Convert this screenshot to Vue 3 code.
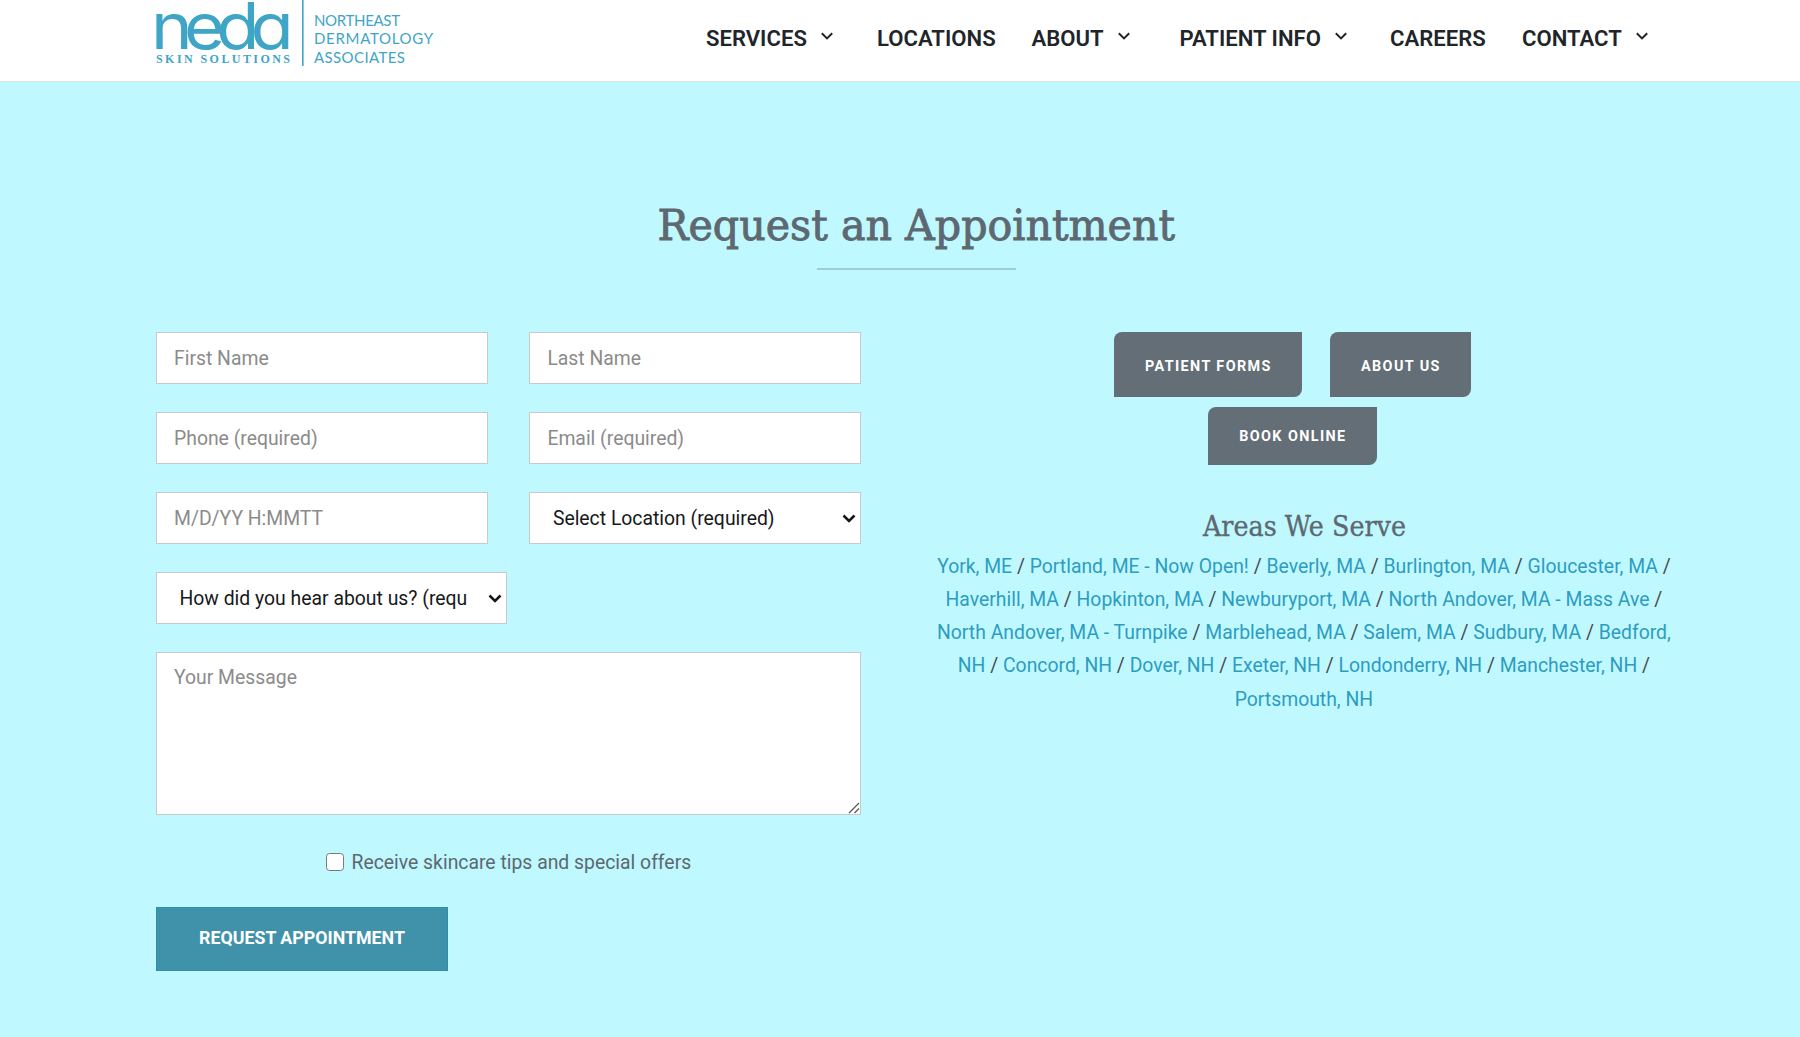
<script setup>
const nav = [
  { label: 'SERVICES', menu: true },
  { label: 'LOCATIONS' },
  { label: 'ABOUT', menu: true },
  { label: 'PATIENT INFO', menu: true },
  { label: 'CAREERS' },
  { label: 'CONTACT', menu: true },
]

// Areas grouped by line; a name may continue on the next line.
const areaLines = [
  ['York, ME', 'Portland, ME - Now Open!', 'Beverly, MA', 'Burlington, MA', 'Gloucester, MA'],
  ['Haverhill, MA', 'Hopkinton, MA', 'Newburyport, MA', 'North Andover, MA - Mass Ave'],
  ['North Andover, MA - Turnpike', 'Marblehead, MA', 'Salem, MA', 'Sudbury, MA', 'Bedford,'],
  ['NH', 'Concord, NH', 'Dover, NH', 'Exeter, NH', 'Londonderry, NH', 'Manchester, NH'],
  ['Portsmouth, NH'],
]
const hasSlash = (name) => name !== 'Bedford,' && name !== 'Portsmouth, NH'
</script>

<template>
  <div class="page">
    <header class="header">
      <a class="logo">
        <svg width="290" height="70" viewBox="0 0 290 70" fill="#3fa5c6">
          <text class="word" x="-5" y="49.3" textLength="134" lengthAdjust="spacingAndGlyphs">neda</text>
          <text class="skin" x="0" y="62.7" textLength="134">SKIN SOLUTIONS</text>
          <rect x="146" y="0" width="1.6" height="66" />
          <g class="assoc">
            <text x="158" y="26" textLength="86">NORTHEAST</text>
            <text x="158" y="44.3" textLength="119">DERMATOLOGY</text>
            <text x="158" y="62.5" textLength="91">ASSOCIATES</text>
          </g>
        </svg>
      </a>
      <nav class="nav">
        <a v-for="item in nav" :key="item.label" class="nav-item">
          <span>{{ item.label }}</span>
          <svg v-if="item.menu" class="caret" width="12" height="8" viewBox="0 0 12 8">
            <path d="M0.8 1.2 6 6.4 11.2 1.2" fill="none" stroke="#212529" stroke-width="2" />
          </svg>
        </a>
      </nav>
    </header>

    <main class="main">
      <h1 class="title">
        <svg width="520" height="56" viewBox="0 0 520 56">
          <text x="0.5" y="39.8" textLength="517.5" lengthAdjust="spacingAndGlyphs">Request an Appointment</text>
        </svg>
      </h1>
      <div class="rule"></div>

      <div class="columns">
        <form class="form" @submit.prevent>
          <input class="field" placeholder="First Name" />
          <input class="field" placeholder="Last Name" />
          <input class="field" placeholder="Phone (required)" />
          <input class="field" placeholder="Email (required)" />
          <input class="field" placeholder="M/D/YY H:MMTT" />
          <div class="select">
            <select class="field"><option>Select Location (required)</option></select>
            <svg class="arrow" width="14" height="10" viewBox="0 0 14 10">
              <path d="M1.5 1.5 7 7 12.5 1.5" fill="none" stroke="#16181b" stroke-width="2.6" />
            </svg>
          </div>
          <div class="select wide">
            <select class="field"><option>How did you hear about us? (required)</option></select>
            <svg class="arrow" width="14" height="10" viewBox="0 0 14 10">
              <path d="M1.5 1.5 7 7 12.5 1.5" fill="none" stroke="#16181b" stroke-width="2.6" />
            </svg>
          </div>
          <div class="message">
            <textarea class="field" placeholder="Your Message"></textarea>
            <svg class="grip" width="12" height="12" viewBox="0 0 12 12">
              <path d="M1 11 11 1M6.5 11 11 6.5" fill="none" stroke="#555" stroke-width="1.2" />
            </svg>
          </div>
          <label class="tips"><input class="check" type="checkbox" /><span>Receive skincare tips and special offers</span></label>
          <button class="submit">REQUEST APPOINTMENT</button>
        </form>

        <aside class="side">
          <div class="buttons">
            <a class="btn forms">PATIENT FORMS</a>
            <a class="btn about">ABOUT US</a>
          </div>
          <div class="buttons second">
            <a class="btn book">BOOK ONLINE</a>
          </div>
          <h2 class="areas-title">
            <svg width="206" height="36" viewBox="0 0 206 36">
              <text x="2" y="26.3" textLength="203" lengthAdjust="spacingAndGlyphs">Areas We Serve</text>
            </svg>
          </h2>
          <div class="areas">
            <div v-for="(line, i) in areaLines" :key="i" class="area-line">
              <template v-for="name in line" :key="name"><a>{{ name }}</a><template v-if="hasSlash(name)"> / </template>{{ ' ' }}</template>
            </div>
          </div>
        </aside>
      </div>
    </main>
  </div>
</template>

<style>
body {
  background: #bff9ff;
}
</style>

<style scoped>
.page {
  width: 1800px;
  height: 1037px;
  overflow: hidden;
  background: #bff9ff;
  font-family: Roboto, "Liberation Sans", sans-serif;
  color: #5d6870;
}
.page * {
  box-sizing: border-box;
}
.header {
  display: flex;
  height: 82px;
  padding-left: 156px;
  background: #fff;
  border-bottom: 1px solid #e3e3e3;
}
.logo {
  width: 550px;
}
.logo svg,
.title svg,
.areas-title svg {
  display: block;
  overflow: visible;
}
.word {
  font: 400 64px Inter, sans-serif;
  font-feature-settings: "cv11";
  letter-spacing: -8px;
}
.skin {
  font: 700 12px "Liberation Serif", serif;
}
.assoc {
  font: 400 15px Lato, sans-serif;
}
.nav {
  display: grid;
  grid-template-columns: 171px 154.5px 148px 210.5px 132px auto;
  height: 75px;
  align-items: center;
  color: #212529;
  font-size: 22.1px;
  font-weight: 600;
  white-space: nowrap;
}
.nav-item {
  display: flex;
  align-items: center;
}
.caret {
  margin: 0 0 3px 14px;
}
.title {
  width: 520px;
  height: 56px;
  margin: 118px 0 0 657px;
  font: 400 42.5px "DejaVu Serif", serif;
  fill: #5d6870;
  stroke: #5d6870;
  stroke-width: 0.9px;
}
.rule {
  width: 199px;
  height: 2px;
  margin: 12px 0 0 817px;
  background: #9dced7;
}
.columns {
  display: flex;
  gap: 74.5px;
  margin: 62px 0 0 156px;
}
.form {
  display: grid;
  grid-template-columns: 332px 332px;
  grid-template-rows: repeat(4, 52px) 163px;
  column-gap: 41.4px;
  row-gap: 28.1px;
  width: 705.4px;
}
.field {
  width: 100%;
  height: 100%;
  margin: 0;
  padding: 0 17px;
  border: 1px solid #c9c9c9;
  border-radius: 0;
  outline: 0;
  background: #fff;
  color: #16181b;
  font: 400 19.38px Roboto, "Liberation Sans", sans-serif;
}
.field::placeholder {
  color: #8b8b8b;
  opacity: 1;
}
.select {
  position: relative;
}
.select .field {
  padding: 0 39.5px 0 22.5px;
  appearance: none;
}
.wide {
  width: 351px;
}
.arrow {
  position: absolute;
  right: 5px;
  top: 22px;
}
.message {
  position: relative;
  grid-column: 1 / 3;
}
.message .field {
  display: block;
  padding: 13px 17px;
  resize: none;
}
.grip {
  position: absolute;
  right: 1px;
  bottom: 1px;
}
.tips {
  grid-column: 1 / 3;
  display: flex;
  align-items: center;
  height: 24px;
  margin: 7px 0 0 170px;
  font-size: 19.38px;
}
.check {
  width: 18px;
  height: 18px;
  margin: 0 7.5px 0 0;
  appearance: none;
  background: #fff;
  border: 1.5px solid #737b80;
  border-radius: 3.5px;
}
.submit {
  width: 292px;
  height: 64px;
  margin-top: 4px;
  padding: 0 0 3px;
  border: 1px solid #2f8eab;
  background: #4091aa;
  color: #fff;
  font: 700 17.8px Roboto, "Liberation Sans", sans-serif;
}
.side {
  width: 736px;
}
.buttons {
  display: flex;
  justify-content: center;
  gap: 28px;
  width: 714px;
}
.second {
  margin-top: 10px;
}
.btn {
  display: flex;
  align-items: center;
  justify-content: center;
  height: 65px;
  padding-top: 4px;
  border-radius: 8px 0 8px 0;
  background: #646e76;
  color: #fff;
  font-size: 14.4px;
  font-weight: 700;
  letter-spacing: 1.4px;
}
.forms {
  width: 188px;
}
.about {
  width: 141px;
}
.book {
  width: 169px;
  height: 58px;
  padding-top: 0;
}
.areas-title {
  width: 206px;
  height: 36px;
  margin: 45px auto 0;
  font: 400 27px "DejaVu Serif", serif;
  fill: #5d6870;
  stroke: #5d6870;
  stroke-width: 0.35px;
}
.areas {
  margin-top: 4px;
  font-size: 19.38px;
  line-height: 33.15px;
  text-align: center;
  color: #4a4a4f;
}
.area-line {
  white-space: nowrap;
}
.areas a {
  color: #2e9cc1;
}
</style>
